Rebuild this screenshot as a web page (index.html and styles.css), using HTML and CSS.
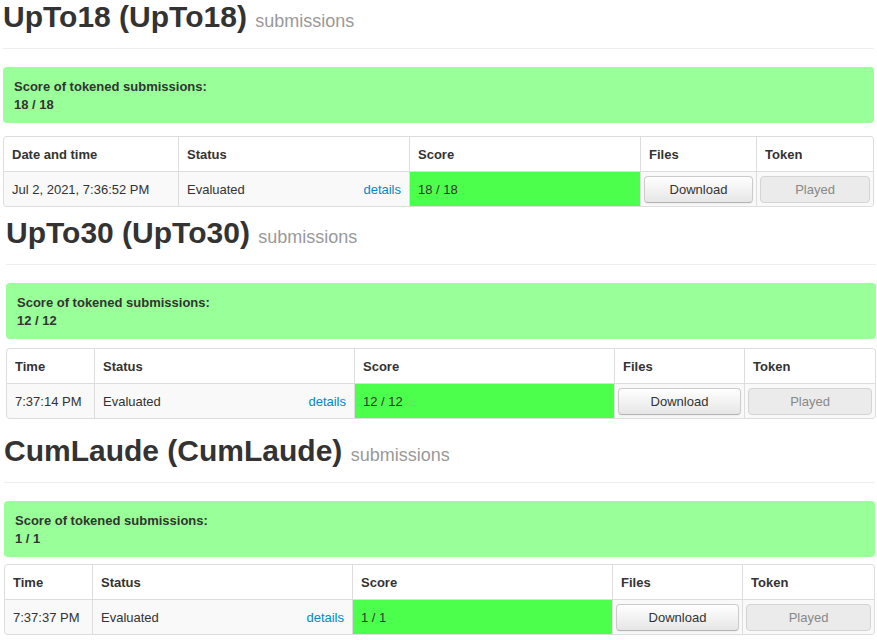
FILE: index.html
```html
<!DOCTYPE html>
<html>
<head>
<meta charset="utf-8">
<title>Submissions</title>
<link rel="stylesheet" href="styles.css">
</head>
<body>
<div class="section sec1">
  <h2 class="page-header">UpTo18 (UpTo18) <small>submissions</small></h2>
  <div class="alert">Score of tokened submissions:<br>18 / 18</div>
  <table class="subs">
    <colgroup><col class="c1"><col class="c2"><col class="c3"><col class="c4"><col class="c5"></colgroup>
    <thead><tr><th>Date and time</th><th>Status</th><th>Score</th><th>Files</th><th>Token</th></tr></thead>
    <tbody><tr><td>Jul 2, 2021, 7:36:52 PM</td><td class="status">Evaluated <a class="details" href="#">details</a></td><td class="score">18 / 18</td><td class="btn-cell"><button class="btn">Download</button></td><td class="btn-cell"><button class="btn" disabled>Played</button></td></tr></tbody>
  </table>
</div>
<div class="section sec2">
  <h2 class="page-header">UpTo30 (UpTo30) <small>submissions</small></h2>
  <div class="alert">Score of tokened submissions:<br>12 / 12</div>
  <table class="subs">
    <colgroup><col class="c1"><col class="c2"><col class="c3"><col class="c4"><col class="c5"></colgroup>
    <thead><tr><th>Time</th><th>Status</th><th>Score</th><th>Files</th><th>Token</th></tr></thead>
    <tbody><tr><td>7:37:14 PM</td><td class="status">Evaluated <a class="details" href="#">details</a></td><td class="score">12 / 12</td><td class="btn-cell"><button class="btn">Download</button></td><td class="btn-cell"><button class="btn" disabled>Played</button></td></tr></tbody>
  </table>
</div>
<div class="section sec3">
  <h2 class="page-header">CumLaude (CumLaude) <small>submissions</small></h2>
  <div class="alert">Score of tokened submissions:<br>1 / 1</div>
  <table class="subs">
    <colgroup><col class="c1"><col class="c2"><col class="c3"><col class="c4"><col class="c5"></colgroup>
    <thead><tr><th>Time</th><th>Status</th><th>Score</th><th>Files</th><th>Token</th></tr></thead>
    <tbody><tr><td>7:37:37 PM</td><td class="status">Evaluated <a class="details" href="#">details</a></td><td class="score">1 / 1</td><td class="btn-cell"><button class="btn">Download</button></td><td class="btn-cell"><button class="btn" disabled>Played</button></td></tr></tbody>
  </table>
</div>
</body>
</html>
```
FILE: styles.css
```css
html, body {
  margin: 0;
  padding: 0;
  background: #fff;
}
body {
  font-family: "Liberation Sans", Arial, sans-serif;
  font-size: 13px;
  line-height: 18px;
  color: #333;
}
.section {
  width: 871px;
}
.sec1 { margin: 0 0 0 3px; }
.sec2 { margin: 9px 0 0 6px; width: 870px; }
.sec3 { margin: 15px 0 0 4px; }

.page-header {
  margin: 0;
  padding: 0 0 14px 0;
  border-bottom: 1px solid #eee;
  font-size: 30px;
  line-height: 34px;
  font-weight: bold;
  color: #333;
}
.page-header small {
  font-size: 18px;
  line-height: 1;
  font-weight: normal;
  color: #999;
}
.alert {
  margin-top: 18px;
  padding: 11px 11px 9px;
  background: #99ff99;
  border-radius: 4px;
  font-weight: bold;
  color: #333;
}
.sec1 .alert { margin-bottom: 13px; }
.sec2 .alert { margin-bottom: 9px; }
.sec3 .alert { margin-bottom: 7px; }

.subs {
  width: 100%;
  table-layout: fixed;
  border-collapse: separate;
  border-spacing: 0;
  border: 1px solid #ddd;
  border-left: 0;
  border-radius: 4px;
}
.subs th, .subs td {
  padding: 9px 8px 7px;
  text-align: left;
  vertical-align: middle;
  border-left: 1px solid #ddd;
  line-height: 18px;
}
.subs th {
  font-weight: bold;
  background: #fff;
}
.subs thead tr:first-child th:first-child { border-top-left-radius: 4px; }
.subs thead tr:first-child th:last-child { border-top-right-radius: 4px; }
.subs tbody tr:last-child td:first-child { border-bottom-left-radius: 4px; }
.subs tbody tr:last-child td:last-child { border-bottom-right-radius: 4px; }
.subs td {
  border-top: 1px solid #ddd;
  background: #f9f9f9;
}
.subs td.score {
  background: #4dff4d;
}
.details {
  float: right;
  color: #0088cc;
  text-decoration: none;
}
.subs td.btn-cell {
  padding: 3px;
}
.btn {
  display: block;
  width: 100%;
  height: 27px;
  padding: 4px 12px;
  font-family: "Liberation Sans", Arial, sans-serif;
  font-size: 13px;
  line-height: 17px;
  color: #333;
  text-align: center;
  background: linear-gradient(to bottom, #ffffff, #e6e6e6);
  border: 1px solid #cccccc;
  border-bottom-color: #b3b3b3;
  border-radius: 4px;
  box-shadow: inset 0 1px 0 rgba(255,255,255,.2), 0 1px 2px rgba(0,0,0,.05);
}
.btn:disabled {
  background: #ebebeb;
  border-color: #d4d4d4;
  color: #888;
  box-shadow: none;
}

.sec1 .c1 { width: 175px; }
.sec1 .c2 { width: 231px; }
.sec1 .c3 { width: 231px; }
.sec1 .c4 { width: 116px; }
.sec1 .c5 { width: 117px; }

.sec2 .c1 { width: 88px; }
.sec2 .c2 { width: 260px; }
.sec2 .c3 { width: 260px; }
.sec2 .c4 { width: 130px; }
.sec2 .c5 { width: 131px; }

.sec3 .c1 { width: 88px; }
.sec3 .c2 { width: 260px; }
.sec3 .c3 { width: 260px; }
.sec3 .c4 { width: 130px; }
.sec3 .c5 { width: 132px; }
```
